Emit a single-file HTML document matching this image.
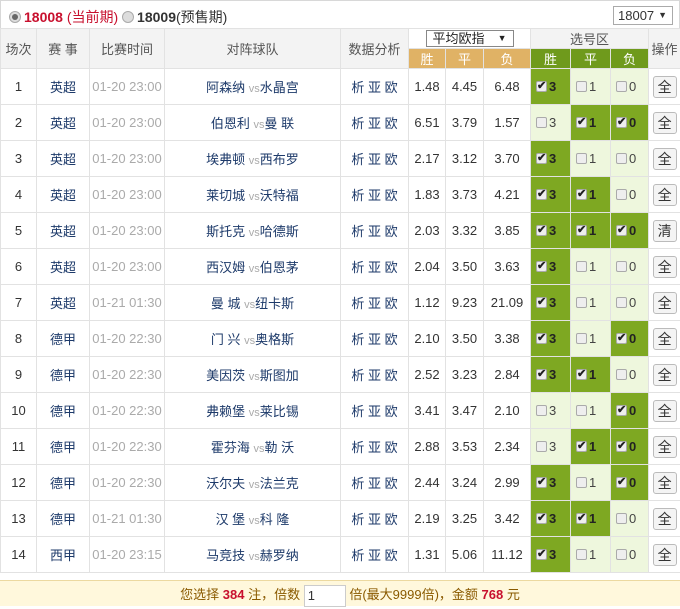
<!DOCTYPE html>
<html><head><meta charset="utf-8"><style>
*{box-sizing:border-box;margin:0;padding:0}
body{width:680px;height:606px;background:#fff;font-family:"Liberation Sans","Noto Sans CJK SC",sans-serif;font-size:13px;color:#333;position:relative;overflow:hidden}
.top{height:28px;border:1px solid #d8d8d8;border-bottom:none;background:#fff;position:relative}
.top .l{position:absolute;left:8px;top:6px;font-size:14px}
.rad{display:inline-block;width:12px;height:12px;border-radius:50%;border:1px solid #aaa;background:#ddd;vertical-align:-1px;margin-right:3px}
.rad.on::after{content:"";display:block;width:6px;height:6px;border-radius:50%;background:#666;margin:2px}
.red{color:#c8102e;font-weight:bold}
.sel{position:absolute;right:6px;top:5px;width:60px;height:19px;border:1px solid #aaa;font-size:13px;padding-left:4px;line-height:17px}
.sel::after{content:"▼";position:absolute;right:5px;font-size:9px}
table{border-collapse:collapse;table-layout:fixed;width:680px;position:absolute;top:28px;left:0}
td{border:1px solid #e2e2e2;text-align:center;height:36px;white-space:nowrap;overflow:hidden}
.h td{background:#f3f3f3;color:#555;font-size:13px;height:20px}
.h2 td{height:19px}
.o{background:#e0b265!important;color:#fff!important}
.g{background:#6f9a1c!important;color:#fff!important}
.t{color:#aaa}
.tm{color:#1d3a6a}
.vs{color:#aaa;font-size:11px}
.c{text-align:left;padding-left:5px;color:#444}
.c.y{background:#7ea822;font-weight:bold;color:#222}
.c.n{background:#eef7dd}
.cb{display:inline-block;width:11px;height:11px;border:1px solid #aaa;border-radius:2px;background:#eee;vertical-align:-1px;margin-right:2px;position:relative}
.y .cb::after{content:"✔";position:absolute;left:0;top:-3px;font-size:11px;color:#222}
.btn{display:inline-block;width:24px;height:22px;border:1px solid #bbb;border-radius:3px;background:#f4f4f4;line-height:20px;font-size:14px}
.sel2{display:inline-block;border:1px solid #888;background:#fff;width:88px;height:17px;line-height:15px;color:#222;position:relative;text-align:left;padding-left:6px}
.sel2::after{content:"▼";position:absolute;right:6px;font-size:9px}
.foot{position:absolute;left:0;top:580px;width:680px;height:26px;background:#fff8dc;border-top:1px solid #ecd9a0;text-align:center;color:#8a5a00;font-size:13px;line-height:28px;padding-left:20px}
.foot b{color:#c8102e}
.inp{display:inline-block;width:42px;height:22px;border:1px solid #ccc;background:#fff;vertical-align:middle;text-align:left;padding-left:3px;line-height:20px;color:#333}
</style></head><body>
<div class="top"><div class="l"><span class="rad on"></span><span class="red">18008 <span style="font-weight:normal">(当前期)</span></span> <span class="rad"></span><b>18009</b>(预售期)</div><div class="sel">18007</div></div>
<table>
<colgroup><col style="width:36px"><col style="width:53px"><col style="width:75px"><col style="width:176px"><col style="width:68px"><col style="width:37px"><col style="width:38px"><col style="width:47px"><col style="width:40px"><col style="width:40px"><col style="width:38px"><col style="width:32px"></colgroup>
<tr class="h"><td rowspan="2">场次</td><td rowspan="2">赛 事</td><td rowspan="2">比赛时间</td><td rowspan="2">对阵球队</td><td rowspan="2">数据分析</td><td colspan="3" style="background:#fff"><span class="sel2">平均欧指</span></td><td colspan="3">选号区</td><td rowspan="2">操作</td></tr>
<tr class="h h2"><td class="o">胜</td><td class="o">平</td><td class="o">负</td><td class="g">胜</td><td class="g">平</td><td class="g">负</td></tr>
<tbody id="b"></tbody>
</table>
<div class="foot">您选择 <b>384</b> 注，倍数 <span class="inp">1</span> 倍(最大9999倍)，金额 <b>768</b> 元</div>
<script>
var d=[["英超","01-20 23:00","阿森纳","水晶宫","1.48","4.45","6.48","100"],
["英超","01-20 23:00","伯恩利","曼 联","6.51","3.79","1.57","011"],
["英超","01-20 23:00","埃弗顿","西布罗","2.17","3.12","3.70","100"],
["英超","01-20 23:00","莱切城","沃特福","1.83","3.73","4.21","110"],
["英超","01-20 23:00","斯托克","哈德斯","2.03","3.32","3.85","111"],
["英超","01-20 23:00","西汉姆","伯恩茅","2.04","3.50","3.63","100"],
["英超","01-21 01:30","曼 城","纽卡斯","1.12","9.23","21.09","100"],
["德甲","01-20 22:30","门 兴","奥格斯","2.10","3.50","3.38","101"],
["德甲","01-20 22:30","美因茨","斯图加","2.52","3.23","2.84","110"],
["德甲","01-20 22:30","弗赖堡","莱比锡","3.41","3.47","2.10","001"],
["德甲","01-20 22:30","霍芬海","勒 沃","2.88","3.53","2.34","011"],
["德甲","01-20 22:30","沃尔夫","法兰克","2.44","3.24","2.99","101"],
["德甲","01-21 01:30","汉 堡","科 隆","2.19","3.25","3.42","110"],
["西甲","01-20 23:15","马竞技","赫罗纳","1.31","5.06","11.12","100"]];
var h="";d.forEach(function(r,i){var s=r[7],lab=["3","1","0"],c="";
for(var k=0;k<3;k++){c+='<td class="c '+(s[k]=="1"?"y":"n")+'"><span class="cb"></span>'+lab[k]+'</td>';}
h+='<tr><td>'+(i+1)+'</td><td class="tm">'+r[0]+'</td><td class="t">'+r[1]+'</td><td class="tm">'+r[2]+' <span class="vs">vs</span>'+r[3]+'</td><td class="tm">析 亚 欧</td><td>'+r[4]+'</td><td>'+r[5]+'</td><td>'+r[6]+'</td>'+c+'<td><span class="btn">'+(s=="111"?"清":"全")+'</span></td></tr>';});
document.getElementById("b").innerHTML=h;
</script>
</body></html>
